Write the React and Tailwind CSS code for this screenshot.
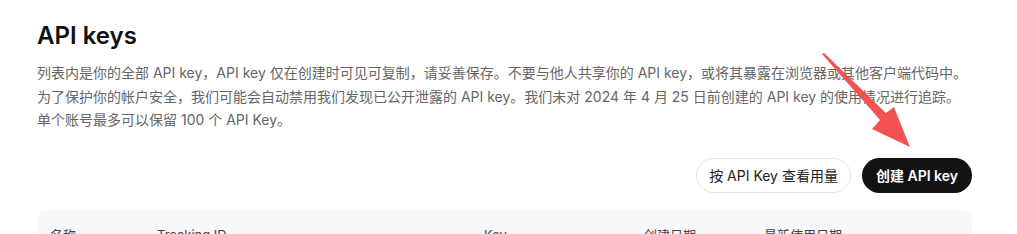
export default function App() {
  return (
    <div
      className="relative w-[1017px] h-[234px] overflow-hidden bg-white"
      style={{ fontFamily: 'Inter, "Noto Sans CJK SC", sans-serif' }}
    >
      <div className="pl-[37px] pr-[45px] pt-[20px]">
        <h1 className="text-[24px] leading-[32px] font-semibold text-[#111]">API keys</h1>
        <p className="mt-[9px] text-[14px] leading-[23.5px] text-[#666] w-[935px]">
          列表内是你的全部 API key，API key 仅在创建时可见可复制，请妥善保存。不要与他人共享你的 API key，或将其暴露在浏览器或其他客户端代码中。
          为了保护你的帐户安全，我们可能会自动禁用我们发现已公开泄露的 API key。我们未对 2024 年 4 月 25 日前创建的 API key 的使用情况进行追踪。
          <br />
          单个账号最多可以保留 100 个 API Key。
        </p>

        <div className="mt-[26px] flex justify-end gap-[11px]">
          <button className="h-[35px] px-[12px] rounded-full border border-[#e5e5e5] bg-white text-[14px] text-[#222]">
            按 API Key 查看用量
          </button>
          <button className="h-[35px] px-[14px] rounded-full bg-[#111214] text-[14px] font-semibold text-white">
            创建 API key
          </button>
        </div>

        <div className="mt-[17px] rounded-t-[10px] bg-[#f7f8fa] h-[60px] flex text-[13px] text-[#444] pt-[16px] pl-[13px]">
          <div className="w-[107px]">名称</div>
          <div className="w-[327px]">Tracking ID</div>
          <div className="w-[160px]">Key</div>
          <div className="w-[120px]">创建日期</div>
          <div>最新使用日期</div>
        </div>
      </div>

      <svg className="absolute left-0 top-0 pointer-events-none" width="1017" height="234">
        <polygon
          points="822,54 824,53 886,113 894,107 910,147 872,129 880,120"
          fill="#f35353"
        />
      </svg>
    </div>
  );
}
